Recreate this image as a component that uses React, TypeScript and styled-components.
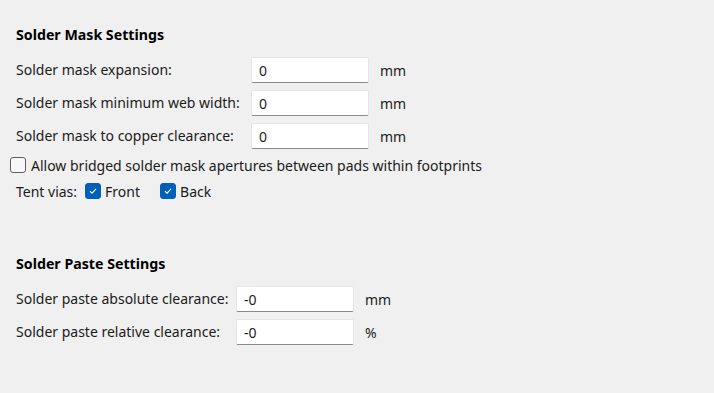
import React from "react";
import styled, { createGlobalStyle } from "styled-components";

const GlobalStyle = createGlobalStyle`
  html, body {
    margin: 0;
    padding: 0;
    background: #f0f0f0;
  }
  body {
    font-family: "Noto Sans", "Open Sans", sans-serif;
    font-size: 14px;
    color: #1b1b1b;
  }
`;

interface FieldProps {
  label: string;
  value: string;
  unit: string;
}

const Page = styled.div`
  width: 714px;
  height: 393px;
  box-sizing: border-box;
  padding: 26px 0 0 16px;
  display: flex;
  flex-direction: column;
`;

const SectionTitle = styled.div<{ $top?: number }>`
  font-weight: bold;
  font-size: 14.2px;
  line-height: 18px;
  margin-top: ${({ $top }) => $top ?? 0}px;
  color: #000;
`;

const FieldGrid = styled.div<{ $labelWidth: number }>`
  display: grid;
  grid-template-columns: ${({ $labelWidth }) => $labelWidth}px 118px auto;
  column-gap: 0;
  row-gap: 7px;
  margin-top: 13px;
  align-items: center;
`;

const Label = styled.span`
  line-height: 26px;
  white-space: nowrap;
`;

const TextBox = styled.div`
  height: 26px;
  box-sizing: border-box;
  background: #ffffff;
  border: 1px solid #e5e5e5;
  border-bottom: 1px solid #8a8a8a;
  border-radius: 2px;
  padding: 0 7px;
  display: flex;
  align-items: center;
`;

const Unit = styled.span`
  padding-left: 11px;
`;

const CheckRow = styled.div<{ $top: number; $indent: number }>`
  display: flex;
  align-items: center;
  height: 20px;
  margin-top: ${({ $top }) => $top}px;
  margin-left: ${({ $indent }) => $indent}px;
`;

const CheckLabel = styled.label<{ $after?: number; $gap?: number }>`
  display: flex;
  align-items: center;
  gap: ${({ $gap }) => $gap ?? 4}px;
  margin-right: ${({ $after }) => $after ?? 0}px;
`;

const Box = styled.span<{ $checked: boolean }>`
  width: 16px;
  height: 16px;
  box-sizing: border-box;
  border-radius: 3px;
  display: inline-flex;
  align-items: center;
  justify-content: center;
  background: ${({ $checked }) => ($checked ? "#005fb8" : "#f7f7f7")};
  border: 1px solid ${({ $checked }) => ($checked ? "#005fb8" : "#5f5f5f")};
`;

const RowText = styled.span<{ $after?: number }>`
  margin-right: ${({ $after }) => $after ?? 0}px;
`;

const CheckBox = ({ checked }: { checked: boolean }) => (
  <Box $checked={checked}>
    {checked && (
      <svg width="10" height="10" viewBox="0 0 10 10">
        <path d="M2 5.2 L4.1 7.2 L8 2.8" fill="none" stroke="#fff" strokeWidth="1.2" />
      </svg>
    )}
  </Box>
);

const Fields = ({ rows, labelWidth }: { rows: FieldProps[]; labelWidth: number }) => (
  <FieldGrid $labelWidth={labelWidth}>
    {rows.map((r) => (
      <React.Fragment key={r.label}>
        <Label>{r.label}</Label>
        <TextBox>{r.value}</TextBox>
        <Unit>{r.unit}</Unit>
      </React.Fragment>
    ))}
  </FieldGrid>
);

const maskRows: FieldProps[] = [
  { label: "Solder mask expansion:", value: "0", unit: "mm" },
  { label: "Solder mask minimum web width:", value: "0", unit: "mm" },
  { label: "Solder mask to copper clearance:", value: "0", unit: "mm" },
];

const pasteRows: FieldProps[] = [
  { label: "Solder paste absolute clearance:", value: "-0", unit: "mm" },
  { label: "Solder paste relative clearance:", value: "-0", unit: "%" },
];

export default function App() {
  return (
    <>
      <GlobalStyle />
      <Page>
        <SectionTitle>Solder Mask Settings</SectionTitle>
        <Fields rows={maskRows} labelWidth={235} />
        <CheckRow $top={6} $indent={-6}>
          <CheckLabel $gap={5}>
            <CheckBox checked={false} />
            Allow bridged solder mask apertures between pads within footprints
          </CheckLabel>
        </CheckRow>
        <CheckRow $top={6} $indent={0}>
          <RowText $after={8}>Tent vias:</RowText>
          <CheckLabel $after={20}>
            <CheckBox checked />
            Front
          </CheckLabel>
          <CheckLabel>
            <CheckBox checked />
            Back
          </CheckLabel>
        </CheckRow>
        <SectionTitle $top={54}>Solder Paste Settings</SectionTitle>
        <Fields rows={pasteRows} labelWidth={220} />
      </Page>
    </>
  );
}
